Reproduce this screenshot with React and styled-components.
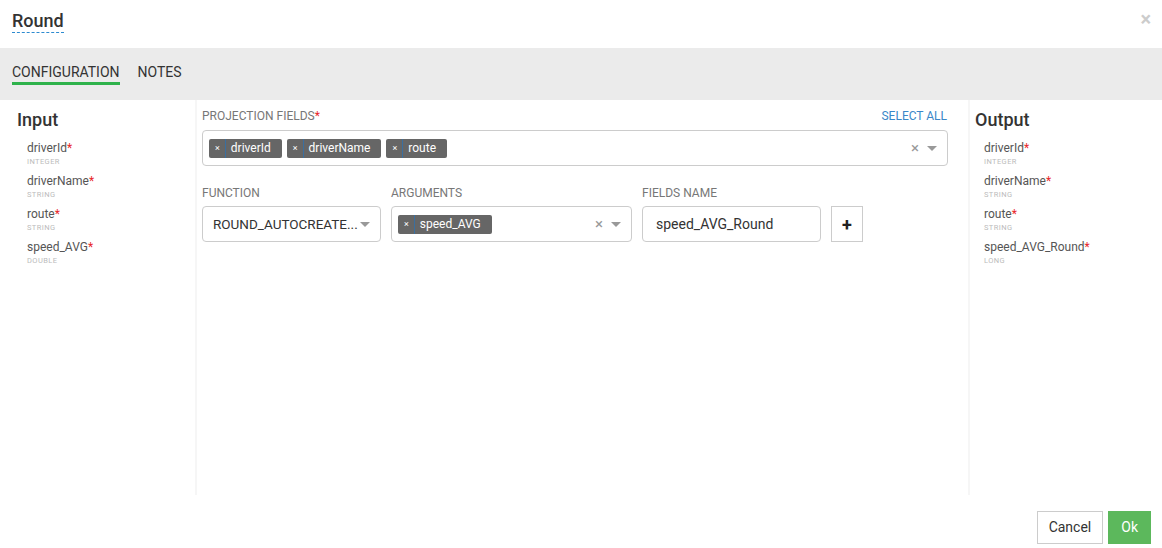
import React from "react";
import styled, { createGlobalStyle } from "styled-components";

const Global = createGlobalStyle`
    html, body {
        margin: 0;
        padding: 0;
        background: #fff;
        font-family: Roboto, "Liberation Sans", sans-serif;
        color: #333;
    }
    * { box-sizing: border-box; }
`;

const Modal = styled.div`
    width: 1162px;
    height: 548px;
    display: flex;
    flex-direction: column;
    background: #fff;
`;
const Header = styled.div`
    height: 48px;
    display: flex;
    align-items: center;
    justify-content: space-between;
    padding: 0 12px;
`;
const Title = styled.span`
    font-size: 18px;
    font-weight: 500;
    color: #333;
    border-bottom: 1px dashed #2d8bd0;
    line-height: 22px;
    padding-bottom: 0;
    margin-top: -5px;
`;
const Close = styled.span`
    font-size: 20px;
    color: #ccc;
    font-weight: 700;
    margin-top: -10px;
    margin-right: -1px;
`;
const Tabs = styled.div`
    height: 52px;
    background: #ebebeb;
    display: flex;
    align-items: flex-end;
    gap: 18px;
    padding: 0 12px 15px;
`;
const Tab = styled.div`
    font-size: 14px;
    color: #333;
    padding-bottom: 2px;
    border-bottom: 3px solid ${({ active }) => (active ? "#2eb24b" : "transparent")};
`;
const Body = styled.div`
    flex: 1;
    display: flex;
    min-height: 0;
`;
const Side = styled.div`
    width: ${({ w }) => w}px;
    padding: 9px 0 0 ${({ pad }) => pad}px;
    ${({ side }) => (side === "left" ? "border-right" : "border-left")}: 2px solid #f6f6f6;
`;
const SideTitle = styled.div`
    font-size: 18px;
    font-weight: 500;
    color: #333;
    margin-bottom: 11px;
`;
const FieldList = styled.div`
    padding-left: ${({ indent }) => indent}px;
    display: flex;
    flex-direction: column;
    gap: 7px;
`;
const Field = styled.div`
    display: flex;
    flex-direction: column;
`;
const FieldName = styled.span`
    font-size: 12px;
    color: #555;
    line-height: 15px;
`;
const Req = styled.span`
    color: #e8262a;
`;
const FieldType = styled.span`
    font-size: 7.5px;
    color: #bbb;
    text-transform: uppercase;
    letter-spacing: 0.4px;
    line-height: 10px;
    margin-top: 1px;
`;
const Main = styled.div`
    flex: 1;
    padding: 9px 20px 0 5px;
`;
const LabelRow = styled.div`
    display: flex;
    justify-content: space-between;
    align-items: center;
    margin-bottom: 7px;
`;
const Label = styled.div`
    font-size: 12px;
    color: #777;
    text-transform: uppercase;
    margin-bottom: ${({ mb }) => mb || 0}px;
`;
const Link = styled.span`
    font-size: 12px;
    color: #3a87c8;
    margin-right: 1px;
`;
const Select = styled.div`
    height: 36px;
    border: 1px solid #ccc;
    border-radius: 4px;
    display: flex;
    align-items: center;
    padding: 0 6px;
    gap: 5px;
    width: ${({ w }) => (w ? w + "px" : "auto")};
`;
const Tag = styled.div`
    display: flex;
    align-items: center;
    height: 19px;
    background: #666;
    color: #fff;
    border-radius: 2px;
    font-size: 12px;
`;
const TagX = styled.span`
    padding: 0 5px 0 6px;
    font-size: 9px;
    line-height: 19px;
    border-right: 1px solid #3a6fa0;
`;
const TagText = styled.span`
    padding: 0 11px 0 5px;
`;
const Fill = styled.div`
    flex: 1;
`;
const Clear = styled.span`
    color: #999;
    font-size: 15px;
    margin-right: 3px;
`;
const Arrow = styled.span`
    flex-shrink: 0;
    width: 0;
    height: 0;
    border-left: 5px solid transparent;
    border-right: 5px solid transparent;
    border-top: 5px solid #999;
    margin-right: 4px;
`;
const Row = styled.div`
    display: flex;
    align-items: flex-end;
    margin-top: 20px;
    gap: 10px;
`;
const Col = styled.div`
    display: flex;
    flex-direction: column;
`;
const Value = styled.span`
    flex: 1;
    min-width: 0;
    font-size: 13.5px;
    color: #333;
    padding-left: 4px;
    white-space: nowrap;
`;
const Input = styled.div`
    width: 179px;
    height: 36px;
    border: 1px solid #ccc;
    border-radius: 4px;
    padding: 0 13px;
    display: flex;
    align-items: center;
    font-size: 14px;
    color: #333;
`;
const Plus = styled.div`
    width: 32px;
    height: 36px;
    border: 1px solid #ccc;
    display: flex;
    align-items: center;
    justify-content: center;
    font-size: 18px;
    font-weight: 700;
    color: #222;
`;
const Footer = styled.div`
    height: 53px;
    display: flex;
    justify-content: flex-end;
    align-items: center;
    gap: 5px;
    padding: 11px 11px 0 0;
`;
const Button = styled.button`
    height: 33px;
    padding: 0 ${({ primary }) => (primary ? 12 : 11)}px;
    font-family: inherit;
    font-size: 14px;
    border: 1px solid ${({ primary }) => (primary ? "#5cb85c" : "#ccc")};
    background: ${({ primary }) => (primary ? "#5cb85c" : "#fff")};
    color: ${({ primary }) => (primary ? "#fff" : "#333")};
    border-radius: 0;
`;

const input = [
    { name: "driverId", type: "integer" },
    { name: "driverName", type: "string" },
    { name: "route", type: "string" },
    { name: "speed_AVG", type: "double" },
];
const output = [
    { name: "driverId", type: "integer" },
    { name: "driverName", type: "string" },
    { name: "route", type: "string" },
    { name: "speed_AVG_Round", type: "long" },
];

const Fields = ({ list, indent }) => (
    <FieldList indent={indent}>
        {list.map((f) => (
            <Field key={f.name}>
                <FieldName>
                    {f.name}
                    <Req>*</Req>
                </FieldName>
                <FieldType>{f.type}</FieldType>
            </Field>
        ))}
    </FieldList>
);

const Chip = ({ children }) => (
    <Tag>
        <TagX>×</TagX>
        <TagText>{children}</TagText>
    </Tag>
);

const App = () => {
    return (
        <>
            <Global />
            <Modal>
                <Header>
                    <Title>Round</Title>
                    <Close>×</Close>
                </Header>
                <Tabs>
                    <Tab active>CONFIGURATION</Tab>
                    <Tab>NOTES</Tab>
                </Tabs>
                <Body>
                    <Side w={197} pad={17} side="left">
                        <SideTitle>Input</SideTitle>
                        <Fields list={input} indent={10} />
                    </Side>
                    <Main>
                        <LabelRow>
                            <Label>
                                Projection Fields<Req>*</Req>
                            </Label>
                            <Link>SELECT ALL</Link>
                        </LabelRow>
                        <Select>
                            <Chip>driverId</Chip>
                            <Chip>driverName</Chip>
                            <Chip>route</Chip>
                            <Fill />
                            <Clear>×</Clear>
                            <Arrow />
                        </Select>
                        <Row>
                            <Col>
                                <Label mb={6}>Function</Label>
                                <Select w={179}>
                                    <Value>ROUND_AUTOCREATE...</Value>
                                    <Arrow />
                                </Select>
                            </Col>
                            <Col>
                                <Label mb={6}>Arguments</Label>
                                <Select w={241}>
                                    <Chip>speed_AVG</Chip>
                                    <Fill />
                                    <Clear>×</Clear>
                                    <Arrow />
                                </Select>
                            </Col>
                            <Col>
                                <Label mb={6}>Fields Name</Label>
                                <Input>speed_AVG_Round</Input>
                            </Col>
                            <Plus>+</Plus>
                        </Row>
                    </Main>
                    <Side w={194} pad={5} side="right">
                        <SideTitle>Output</SideTitle>
                        <Fields list={output} indent={9} />
                    </Side>
                </Body>
                <Footer>
                    <Button>Cancel</Button>
                    <Button primary>Ok</Button>
                </Footer>
            </Modal>
        </>
    );
};

export default App;
